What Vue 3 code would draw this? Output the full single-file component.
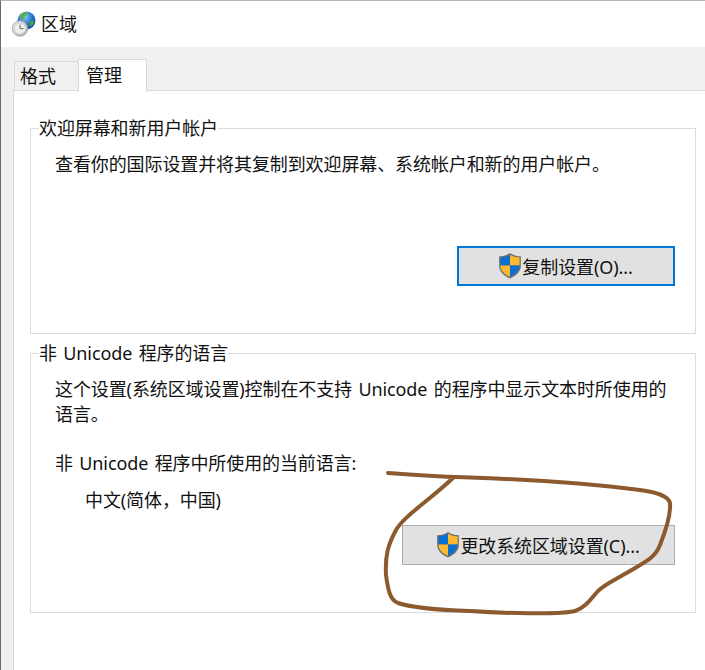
<script setup>
const shieldBox = "2 1.500 20 24"
</script>

<template>
  <div class="win">
    <header class="title">
      <svg class="globe" width="24" height="26" viewBox="0 0 24 26">
        <defs>
          <radialGradient id="g1" cx="0.4" cy="0.3" r="0.8">
            <stop offset="0" stop-color="#8fd0f2" />
            <stop offset="0.55" stop-color="#1f6fd0" />
            <stop offset="1" stop-color="#123f95" />
          </radialGradient>
          <linearGradient id="g2" x1="0" y1="0" x2="1" y2="1">
            <stop offset="0" stop-color="#f2f2f2" />
            <stop offset="1" stop-color="#a9a9a9" />
          </linearGradient>
        </defs>
        <circle cx="14.500" cy="9.500" r="9" fill="url(#g1)" />
        <path d="M9.500 3c2-1.500 4.500-2 6.500-1.500l-1 2.500-2.500 1 .5 2.500-2 1-2-1.500-1.500 0z" fill="#5cae45" />
        <path d="M17 11l3-1 2.500.5-1.500 3-2.500 2-1-2z" fill="#4da53d" />
        <circle cx="8" cy="17.500" r="7.800" fill="url(#g2)" stroke="#9a9a9a" stroke-width="0.700" />
        <circle cx="8" cy="17.500" r="5.600" fill="#efefef" stroke="#bdbdbd" stroke-width="0.500" />
        <path d="M8 13.600v4h3.400" fill="none" stroke="#666" stroke-width="1" />
      </svg>
      <span>区域</span>
    </header>

    <main class="body">
      <nav class="tabs">
        <div class="tab">格式</div>
        <div class="tab active">管理</div>
      </nav>

      <section class="panel">
        <fieldset class="group first">
          <legend>欢迎屏幕和新用户帐户</legend>
          <p class="line">查看你的国际设置并将其复制到欢迎屏幕、系统帐户和新的用户帐户。</p>
          <div class="actions one">
            <button class="btn focus">
              <svg class="shield" width="22" height="26" :viewBox="shieldBox">
                <path d="M12 1.500c3 2.200 6.500 3 10 3v9c0 5.500-4.500 9-10 11.500C6.500 22.500 2 19 2 13.500v-9c3.500 0 7-.8 10-3z" fill="#6b6f73" />
                <path d="M12 3v10H3.200V5.500C6.500 5.300 9.500 4.600 12 3z" fill="#0a6fd0" />
                <path d="M12 3c2.500 1.600 5.500 2.300 8.800 2.500V13H12z" fill="#fdb92e" />
                <path d="M3.200 13H12v10.500c-5-2.200-8.800-5.500-8.800-10z" fill="#fdb92e" />
                <path d="M12 13h8.800c0 4.500-3.800 7.800-8.800 10.500z" fill="#0a6fd0" />
              </svg><span>复制设置(O)...</span>
            </button>
          </div>
        </fieldset>

        <fieldset class="group second">
          <legend>非 Unicode 程序的语言</legend>
          <p class="para">这个设置(系统区域设置)控制在不支持 Unicode 的程序中显示文本时所使用的语言。</p>
          <p class="current">非 Unicode 程序中所使用的当前语言:</p>
          <p class="lang">中文(简体，中国)</p>
          <div class="actions two">
            <button class="btn">
              <svg class="shield" width="22" height="26" :viewBox="shieldBox">
                <path d="M12 1.500c3 2.200 6.500 3 10 3v9c0 5.500-4.500 9-10 11.500C6.500 22.500 2 19 2 13.500v-9c3.500 0 7-.8 10-3z" fill="#6b6f73" />
                <path d="M12 3v10H3.200V5.500C6.500 5.300 9.500 4.600 12 3z" fill="#0a6fd0" />
                <path d="M12 3c2.500 1.600 5.500 2.300 8.800 2.500V13H12z" fill="#fdb92e" />
                <path d="M3.200 13H12v10.500c-5-2.200-8.800-5.500-8.800-10z" fill="#fdb92e" />
                <path d="M12 13h8.800c0 4.500-3.800 7.800-8.800 10.500z" fill="#0a6fd0" />
              </svg><span>更改系统区域设置(C)...</span>
            </button>
          </div>
        </fieldset>
      </section>
    </main>

    <svg class="scribble" width="705" height="670" viewBox="0 0 705 670">
      <path d="M388 473C440 477 455 477 470 477.500C540 480 600 485 640 490C655 492 668 495 670 503C671 515 666 530 660 545C655 558 645 562 630 571C615 580 605 584 598 591C590 600 586 607 575 611C560 615 500 613 470 611C440 610 410 607 398 603C390 600 388 590 386 575C385 555 388 545 396 530C405 515 430 500 454 477"
        fill="none" stroke="#8c5a2e" stroke-width="4" stroke-linecap="round" stroke-linejoin="round" />
    </svg>
  </div>
</template>

<style>
html, body { margin: 0; padding: 0; background: #fff; }
</style>

<style scoped>
.win {
  position: relative;
  width: 705px;
  height: 670px;
  overflow: hidden;
  box-sizing: border-box;
  border-left: 1px solid #6a6a6a;
  border-top: 1px solid #b5b5b5;
  background: #fff;
  font-family: "Noto Sans", "Noto Sans CJK SC", "Liberation Sans", sans-serif;
  font-size: 18px;
  letter-spacing: -0.1px;
  word-spacing: 1.800px;
  color: #111;
}
.title {
  height: 46px;
  display: flex;
  align-items: center;
  gap: 5px;
  padding-left: 11px;
  background: #fff;
}
.globe { margin-top: -1px; }
.title span { position: relative; top: -1px; }
.body {
  height: 623px;
  background: #f0f0f0;
  padding: 12px 0 0 12px;
  box-sizing: border-box;
  display: flex;
  flex-direction: column;
}
.tabs {
  display: flex;
  align-items: flex-end;
  height: 31px;
  position: relative;
  z-index: 1;
}
.tab {
  box-sizing: border-box;
  width: 65px;
  height: 29px;
  margin-left: 1px;
  border: 1.500px solid #d9d9d9;
  border-bottom: 0;
  line-height: 28px;
  padding-left: 5px;
}
.tab.active {
  width: 69px;
  margin-left: -1px;
  padding-left: 7px;
  background: #fff;
  line-height: 30px;
  margin-bottom: -2px;
  height: 33px;
}
.panel {
  flex: 1;
  background: #fff;
  border-left: 1.500px solid #d9d9d9;
  border-top: 1.500px solid #d9d9d9;
  padding: 37px 9px 0 16px;
  display: flex;
  flex-direction: column;
  gap: 20px;
}
.group {
  margin: 0;
  border: 1.500px solid #dcdcdc;
  padding: 0;
  position: relative;
  box-sizing: border-box;
  min-width: 0;
}
.group legend {
  padding: 0;
  margin-left: 8px;
  line-height: 20px;
  background: #fff;
}
.first { height: 216px; margin-top: -10px; }
.second { height: 270px; margin-top: -11px; }
.line, .para, .current, .lang { margin: 0; line-height: 25px; }
.line { padding: 14px 0 0 24px; }
.para { padding: 14px 20px 0 24px; }
.current { padding: 24px 0 0 24px; }
.lang { padding: 12px 0 0 54px; }
.actions {
  display: flex;
  justify-content: flex-end;
}
.actions.one { padding: 69px 20px 0 0; }
.actions.two { padding: 12px 20px 0 0; }
.btn {
  box-sizing: border-box;
  background: #e1e1e1;
  border: 1.500px solid #adadad;
  font: inherit;
  letter-spacing: inherit;
  color: inherit;
  padding: 0;
  display: flex;
  align-items: center;
  justify-content: center;
}
.btn.focus {
  width: 218px;
  height: 40px;
  border: 2.500px solid #0078d7;
}
.two .btn { width: 273px; height: 40px; }
.shield { flex: none; margin-right: 1px; }
.scribble { position: absolute; left: -1px; top: -1px; pointer-events: none; }
</style>
